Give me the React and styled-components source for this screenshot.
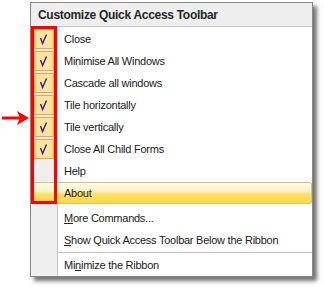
import React from 'react';
import styled, { createGlobalStyle } from 'styled-components';

const GlobalStyle = createGlobalStyle`
  body {
    margin: 0;
    background: #ffffff;
    font-family: 'Liberation Sans', Arial, sans-serif;
  }
`;

const items = [
  { label: 'Close', checked: true },
  { label: 'Minimise All Windows', checked: true },
  { label: 'Cascade all windows', checked: true },
  { label: 'Tile horizontally', checked: true },
  { label: 'Tile vertically', checked: true },
  { label: 'Close All Child Forms', checked: true },
  { label: 'Help', checked: false },
  { label: 'About', checked: false, active: true },
];

const Page = styled.div`
  display: flex;
  width: 324px;
  height: 290px;
  padding-top: 2px;
  box-sizing: border-box;
`;

const ArrowSlot = styled.div`
  width: 30px;
  flex: none;
  padding-top: 107px;
`;

const Menu = styled.div`
  position: relative;
  width: 281px;
  height: 273px;
  border: 1px solid #868686;
  background: #ffffff;
  box-shadow: 4px 4px 4px rgba(0, 0, 0, 0.55);
  display: flex;
  flex-direction: column;
`;

const Header = styled.div`
  height: 23px;
  background: #eeeeee;
  border-bottom: 1px solid #c5c5c5;
  display: flex;
  align-items: center;
  padding-left: 7px;
  font-weight: bold;
  font-size: 12px;
  letter-spacing: -0.3px;
  color: #262626;
`;

const List = styled.div`
  position: relative;
  flex: 1;
  display: flex;
  flex-direction: column;
  padding-top: 1px;
  background: linear-gradient(to right, #efefef 0, #efefef 26px, #c5c5c5 26px, #c5c5c5 27px, #ffffff 27px);
`;

const Row = styled.div`
  height: 22px;
  display: flex;
  align-items: center;
  box-sizing: border-box;
  font-size: 11px;
  letter-spacing: -0.25px;
  color: #222222;
  border: 1px solid ${p => (p.$active ? '#dbc27c' : 'transparent')};
  border-radius: 2px;
  background: ${p =>
    p.$active
      ? 'linear-gradient(to bottom, #fffdf0 0%, #fff3c4 40%, #ffe06a 55%, #ffd743 100%)'
      : 'transparent'};
`;

const Gutter = styled.div`
  width: 26px;
  flex: none;
  display: flex;
  align-items: center;
  justify-content: center;
  margin-left: -1px;
`;

const Check = styled.div`
  width: 18px;
  height: 18px;
  flex: none;
  border: 1px solid #f2a04e;
  background: #fee39b;
  display: flex;
  align-items: center;
  justify-content: center;
`;

const Label = styled.span`
  padding-left: 7px;
  white-space: nowrap;
`;

const Key = styled.span`
  text-decoration: underline;
`;

const Separator = styled.div`
  height: 1px;
  margin: 1px 0 1px 27px;
  background: ${p => (p.$faint ? '#ffffff' : '#c5c5c5')};
`;

const Highlight = styled.div`
  position: absolute;
  left: 0;
  top: -1px;
  width: 20px;
  height: 172px;
  border: 3px solid #ff0000;
  pointer-events: none;
`;

const CheckMark = () => (
  <svg width="18" height="18" viewBox="0 0 18 18">
    <path d="M5.5 8 L7.6 13.5 L11.5 4.5" fill="none" stroke="#23238e" strokeWidth="1.4" />
  </svg>
);

const Arrow = () => (
  <svg width="30" height="18" viewBox="0 0 30 18">
    <line x1="2" y1="9" x2="22" y2="9" stroke="#ff0000" strokeWidth="3" />
    <polygon points="17,2 29,9 17,16 20,9" fill="#ff0000" />
  </svg>
);

export default function App() {
  return (
    <>
      <GlobalStyle />
      <Page>
        <ArrowSlot>
          <Arrow />
        </ArrowSlot>
        <Menu>
          <Header>Customize Quick Access Toolbar</Header>
          <List>
            <Highlight />
            {items.map(item => (
              <Row key={item.label} $active={item.active}>
                <Gutter>
                  {item.checked && (
                    <Check>
                      <CheckMark />
                    </Check>
                  )}
                </Gutter>
                <Label>{item.label}</Label>
              </Row>
            ))}
            <Separator $faint />
            <Row>
              <Gutter />
              <Label>
                <Key>M</Key>ore Commands...
              </Label>
            </Row>
            <Row>
              <Gutter />
              <Label>
                <Key>S</Key>how Quick Access Toolbar Below the Ribbon
              </Label>
            </Row>
            <Separator />
            <Row>
              <Gutter />
              <Label>
                Mi<Key>n</Key>imize the Ribbon
              </Label>
            </Row>
          </List>
        </Menu>
      </Page>
    </>
  );
}
